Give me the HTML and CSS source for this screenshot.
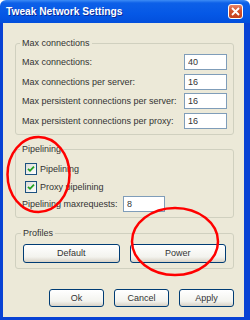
FILE: index.html
```html
<!DOCTYPE html>
<html lang="en">
<head>
    <meta charset="UTF-8">
    <meta name="viewport" content="width=device-width, initial-scale=1.0">
    <title>Tweak Network Settings</title>
    <link rel="stylesheet" href="styles.css">
</head>
<body>

    <div class="window">
        <div class="titlebar">
            <span class="title">Tweak Network Settings</span>
            <span class="close" aria-label="Close">
                <svg width="9" height="9" viewBox="0 0 9 9"><path d="M1 1 L8 8 M8 1 L1 8" stroke="#fff" stroke-width="1.8" fill="none"/></svg>
            </span>
        </div>

        <div class="client">
            <fieldset class="group conn">
                <legend>Max connections</legend>
                <div class="row"><label>Max connections:</label><input type="text" value="40"></div>
                <div class="row"><label>Max connections per server:</label><input type="text" value="16"></div>
                <div class="row"><label>Max persistent connections per server:</label><input type="text" value="16"></div>
                <div class="row"><label>Max persistent connections per proxy:</label><input type="text" value="16"></div>
            </fieldset>

            <fieldset class="group pipe">
                <legend>Pipelining</legend>
                <label class="check"><span class="box"><svg width="10" height="10" viewBox="0 0 10 10"><path d="M2 4.8 L4 6.8 L8 2.6" stroke="#21a121" stroke-width="1.8" fill="none"/></svg></span>Pipelining</label>
                <label class="check"><span class="box"><svg width="10" height="10" viewBox="0 0 10 10"><path d="M2 4.8 L4 6.8 L8 2.6" stroke="#21a121" stroke-width="1.8" fill="none"/></svg></span>Proxy pipelining</label>
                <div class="row maxreq"><label>Pipelining maxrequests:</label><input type="text" value="8"></div>
            </fieldset>

            <fieldset class="group profiles">
                <legend>Profiles</legend>
                <div class="profile-buttons">
                    <button>Default</button>
                    <button>Power</button>
                </div>
            </fieldset>

            <div class="actions">
                <button>Ok</button>
                <button>Cancel</button>
                <button>Apply</button>
            </div>
        </div>

        <!-- hand drawn marks over the dialog -->
        <svg class="marks" width="250" height="320" viewBox="0 0 250 320">
            <ellipse cx="38.5" cy="174.5" rx="31" ry="37.5" fill="none" stroke="#f00" stroke-width="2.5"/>
            <ellipse cx="175" cy="241.5" rx="43" ry="33.5" fill="none" stroke="#f00" stroke-width="2.5"/>
        </svg>
    </div>

</body>
</html>
```

FILE: styles.css
```css
body {
    margin: 0;
    font-family: "Liberation Sans", Arial, sans-serif;
    font-size: 9px;
    color: #333;
    background: #fff;
}
.window {
    position: relative;
    width: 250px;
    height: 320px;
    display: flex;
    flex-direction: column;
}
.titlebar {
    height: 23px;
    flex: none;
    display: flex;
    align-items: center;
    justify-content: space-between;
    padding: 0 7px 0 6px;
    box-sizing: border-box;
    background: linear-gradient(to bottom, #3d8cf5 0, #0d60e8 3px, #0558e6 60%, #024fdc 100%);
    border-radius: 6px 6px 0 0;
}
.title {
    color: #fff;
    font-weight: bold;
    font-size: 10.2px;
    text-shadow: 1px 1px #0a2a9a;
}
.close {
    width: 15px;
    height: 15px;
    box-sizing: border-box;
    border: 1px solid #fff;
    border-radius: 3px;
    background: linear-gradient(to bottom, #e8866a, #d3512b 45%, #c4401c);
    display: flex;
    align-items: center;
    justify-content: center;
}
.client {
    flex: 1;
    background: #ece9d8;
    border: solid #0842d4;
    border-width: 0 6px 3px 3px;
    padding: 14px 10px 0 12px;
}
.group {
    margin: 0;
    border: 1px solid #d0d0bf;
    border-radius: 3px;
    min-inline-size: 0;
}
.group legend {
    padding: 0 2px;
    margin-left: -2px;
    line-height: 13px;
    color: #333;
}
.row {
    display: flex;
    align-items: center;
    justify-content: space-between;
    height: 16px;
}
.row input {
    width: 43px;
    height: 16px;
    box-sizing: border-box;
    border: 1px solid #7f9db9;
    background: #fff;
    padding: 0 3px;
    font-family: inherit;
    font-size: 9px;
    color: #333;
}
.conn {
    padding: 4px 6px 5px 6px;
    display: flex;
    flex-direction: column;
    gap: 3.67px;
}
.pipe {
    margin-top: 8px;
    padding: 5px 6px 5px 6px;
}
.check {
    display: flex;
    align-items: center;
    gap: 3px;
    height: 16px;
    margin-left: 3px;
    margin-bottom: 2px;
}
.box {
    width: 12px;
    height: 12px;
    box-sizing: border-box;
    border: 1px solid #1c5180;
    background: linear-gradient(135deg, #dcdcd7, #fff);
    display: flex;
    align-items: center;
    justify-content: center;
}
.maxreq {
    justify-content: flex-start;
    margin-top: -1px;
}
.maxreq label {
    width: 101px;
}
.maxreq input {
    width: 42px;
}
.profiles {
    margin-top: 9px;
    padding: 4px 7px 5px 7px;
}
.profile-buttons {
    display: flex;
    gap: 10px;
}
button {
    font-family: inherit;
    font-size: 9px;
    color: #333;
    border: 1px solid #003c74;
    border-radius: 3px;
    background: linear-gradient(to bottom, #fff, #f3f3ee 70%, #d8d2c6);
    padding: 0;
}
.profile-buttons button {
    flex: 1;
    height: 19px;
}
.actions {
    display: flex;
    justify-content: flex-end;
    gap: 10px;
    margin-top: 20px;
}
.actions button {
    width: 55px;
    height: 18px;
}
.marks {
    position: absolute;
    left: 0;
    top: 0;
    pointer-events: none;
}
```
